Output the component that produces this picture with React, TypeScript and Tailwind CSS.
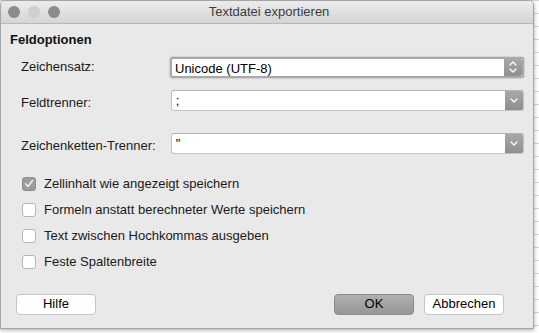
import React from "react";

function Chevron({ up }: { up?: boolean }) {
  return (
    <svg width="8" height="5" viewBox="0 0 8 5" fill="none">
      <path d={up ? "M1 4L4 1L7 4" : "M1 1L4 4L7 1"} stroke="white" strokeWidth="1.3" strokeLinecap="round" strokeLinejoin="round" />
    </svg>
  );
}

function SelectBox({ value, focused, stepper }: { value: string; focused?: boolean; stepper?: boolean }) {
  return (
    <div
      className={`flex h-[21px] w-[354px] items-stretch rounded-[3px] bg-white ${
        focused ? "border-2 border-[#a9a9a9] shadow-[0_0_2px_#9a9a9a]" : "border border-[#c2c2c2] border-t-[#b3b3b3]"
      }`}
    >
      <span className={`flex-1 pl-[3px] text-[13px] leading-[19px] text-black ${focused ? "" : "pl-[4px]"}`}>{value}</span>
      <span className="flex w-[18px] flex-col items-center justify-center gap-[2px] rounded-r-[2px] bg-gradient-to-b from-[#a8a8a8] to-[#8e8e8e]">
        {stepper ? <Chevron up /> : null}
        <Chevron />
      </span>
    </div>
  );
}

function Check({ label, checked }: { label: string; checked?: boolean }) {
  return (
    <div className="flex h-[26px] items-center gap-[8px] pl-[12px]">
      <span
        className={`flex h-[14px] w-[14px] items-center justify-center rounded-[3px] ${
          checked ? "bg-[#9c9c9c] border border-[#8e8e8e]" : "border border-[#b5b5b5] bg-white"
        }`}
      >
        {checked ? (
          <svg width="10" height="9" viewBox="0 0 10 9" fill="none">
            <path d="M1.5 4.8L4 7.5L8.5 1.5" stroke="#f4f4f4" strokeWidth="1.4" strokeLinecap="round" strokeLinejoin="round" />
          </svg>
        ) : null}
      </span>
      <span className="text-[13px] text-[#1a1a1a]">{label}</span>
    </div>
  );
}

function Button({ label, primary }: { label: string; primary?: boolean }) {
  return (
    <div
      className={`flex h-[21px] w-[80px] items-center justify-center rounded-[4px] text-[13px] text-black ${
        primary ? "border border-[#8c8c8c] bg-gradient-to-b from-[#b0b0b0] to-[#969696]" : "border border-[#c4c4c4] bg-white"
      }`}
    >
      {label}
    </div>
  );
}

export default function App() {
  return (
    <div
      className="h-[333px] w-[539px] overflow-hidden bg-white bg-[linear-gradient(to_bottom,#d4d4d4_1px,transparent_1px)] bg-[length:100%_13px]"
      style={{ fontFamily: '"Liberation Sans", Arial, sans-serif' }}
    >
      <div className="flex h-[329px] w-[534px] flex-col overflow-hidden rounded-t-[5px] border border-[#a6a6a6] bg-[#e9e9e9] shadow-[0_1px_4px_rgba(0,0,0,0.35)]">
        <div className="relative flex h-[23px] items-center justify-center border-b border-[#b8b8b8] bg-gradient-to-b from-[#ececec] to-[#d4d4d4]">
          <div className="absolute left-[7px] top-[5px] flex gap-[8px]">
            <span className="h-[12px] w-[12px] rounded-full bg-[#8b8b8b]" />
            <span className="h-[12px] w-[12px] rounded-full bg-[#cfcfcf]" />
            <span className="h-[12px] w-[12px] rounded-full bg-[#8b8b8b]" />
          </div>
          <span className="pl-[4px] text-[13px] text-[#3c3c3c]">Textdatei exportieren</span>
        </div>

        <div className="flex flex-1 flex-col px-[9px]">
          <div className="mt-[6px] text-[13px] font-bold text-[#111]">Feldoptionen</div>

          <div className="mt-[7px] flex items-center">
            <span className="w-[160px] pl-[11px] text-[13px] text-[#1a1a1a]">Zeichensatz:</span>
            <SelectBox value="Unicode (UTF-8)" focused stepper />
          </div>
          <div className="mt-[12px] flex items-center">
            <span className="w-[161px] pl-[11px] pt-[3px] text-[13px] text-[#1a1a1a]">Feldtrenner:</span>
            <SelectBox value=";" />
          </div>
          <div className="mt-[19px] flex items-center">
            <span className="w-[161px] pl-[11px] pt-[5px] text-[13px] text-[#1a1a1a]">Zeichenketten-Trenner:</span>
            <SelectBox value={'"'} />
          </div>

          <div className="mt-[15px] flex flex-col">
            <Check label="Zellinhalt wie angezeigt speichern" checked />
            <Check label="Formeln anstatt berechneter Werte speichern" />
            <Check label="Text zwischen Hochkommas ausgeben" />
            <Check label="Feste Spaltenbreite" />
          </div>

          <div className="mt-[19px] flex items-center px-[6px]">
            <Button label="Hilfe" />
            <div className="flex-1" />
            <Button label="OK" primary />
            <div className="w-[10px]" />
            <Button label="Abbrechen" />
            <div className="w-[14px]" />
          </div>
        </div>
      </div>
    </div>
  );
}
